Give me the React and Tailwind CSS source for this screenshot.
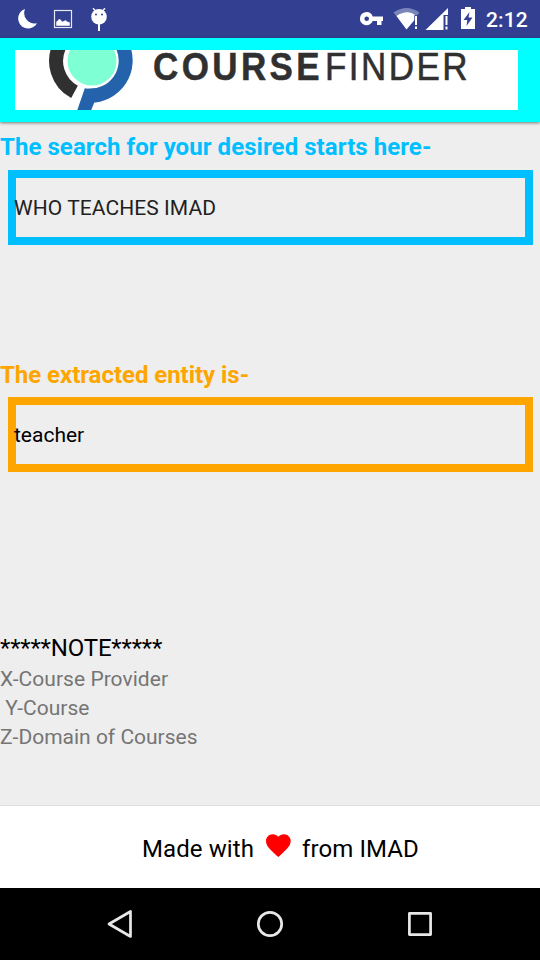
function StatusBar() {
  return (
    <div className="flex h-[38px] shrink-0 items-start bg-[#334091] text-white">
      <svg className="ml-[17px] h-[38px] w-[21px]" viewBox="17 0 21 38" fill="#fff">
        <path d="M25 9A10 10 0 1 0 37 23.200A10.500 10.500 0 0 1 25 9Z" />
      </svg>
      <svg className="ml-[15px] h-[38px] w-[20px]" viewBox="53 0 20 38">
        <rect x="54.5" y="10.5" width="17" height="17" fill="none" stroke="#e6e8f3" strokeWidth="1.2" />
        <path d="M56.500 25.500V22L59.500 19L62.500 22L65.500 20.500L67.500 22L69.500 22.500V25.500Z" fill="#fff" stroke="#fff" strokeWidth=".5" />
      </svg>
      <svg className="ml-[17px] h-[38px] w-[18px]" viewBox="90 0 18 38">
        <ellipse cx="99" cy="16.700" rx="7.800" ry="7.700" fill="#fff" />
        <path d="M93 8.300L95.600 11M105 8.300L102.400 11" stroke="#fff" strokeWidth="1.300" />
        <path d="M99 24V31" stroke="#fff" strokeWidth="2" />
        <circle cx="96" cy="14.600" r="1" fill="#334091" />
        <circle cx="102" cy="14.600" r="1" fill="#334091" />
      </svg>
      <svg className="ml-auto h-[38px] w-[24px]" viewBox="360 0 24 38">
        <path fillRule="evenodd" fill="#fff" d="M366.700 12A6.600 6.600 0 1 0 372.700 21H377V25H381.500V21H383V16.500H372.700A6.600 6.600 0 0 0 366.700 12ZM366.700 16.400A2.300 2.300 0 1 1 366.700 21A2.300 2.300 0 0 1 366.700 16.400Z" />
      </svg>
      <svg className="ml-[9px] h-[38px] w-[28px]" viewBox="393 0 28 38">
        <path d="M393.500 12.500Q406.500 3.500 419.500 12.500L417 15.500H414L406.500 29Z" fill="#7984b9" />
        <path d="M396.500 16Q406.500 9.500 414.500 14.500V20L406.500 29.500Z" fill="#fff" />
        <path d="M414.500 15.500H418V24H414.500Z" fill="#334091" />
        <path d="M416 16V25M416 26.500V29" stroke="#fff" strokeWidth="2" />
      </svg>
      <svg className="ml-[4px] h-[38px] w-[25px]" viewBox="425 0 25 38">
        <path d="M425.500 30L448 8V15H443.500V30Z" fill="#fff" />
        <path d="M446.500 16V25M446.500 26.500V29.500" stroke="#fff" strokeWidth="2" />
      </svg>
      <svg className="ml-[10px] h-[38px] w-[16px]" viewBox="460 0 16 38">
        <path d="M461 9H465V7H471V9H475V29H461Z" fill="#fff" />
        <path d="M469.500 12L463.500 20H467.300L466.500 26L472.500 17.500H468.500Z" fill="#334091" />
      </svg>
      <span className="mr-[12px] ml-[10px] w-[42px] text-[21px] leading-[40px] font-medium tracking-[0.1px] whitespace-nowrap">2:12</span>
    </div>
  );
}

function Header() {
  return (
    <header className="z-10 h-[84px] shrink-0 bg-[#00ffff] pt-3 pl-[15px] shadow-[0_1px_3px_rgba(0,0,0,0.5)]">
      <div className="flex h-[60px] w-[503px] bg-white">
        <svg className="h-[60px] w-[138px] shrink-0" viewBox="15 50 138 60">
          <path d="M60 45A35 35 0 0 0 74.500 91.900" fill="none" stroke="#303030" strokeWidth="14" />
          <path d="M122 45A35 35 0 0 1 88 95.500" fill="none" stroke="#2463ac" strokeWidth="14" />
          <path d="M84.800 88.300L77 111H90.800L94.500 102L95 88.600L90 89Z" fill="#2463ac" />
          <circle cx="92" cy="61" r="24.500" fill="#7fffd4" />
        </svg>
        <div className="flex font-['Liberation_Sans',Arial,sans-serif] text-[38px] leading-[34px] text-[#303030]">
          <span className="w-[172px] origin-left scale-x-[0.92] font-bold tracking-[3.7px] whitespace-nowrap [-webkit-text-stroke:0.5px_#303030]">COURSE</span>
          <span className="origin-left scale-x-[0.92] tracking-[2.7px] whitespace-nowrap [-webkit-text-stroke:0.6px_#303030]">FINDER</span>
        </div>
      </div>
    </header>
  );
}

function NavigationBar() {
  return (
    <nav className="flex h-[72px] shrink-0 items-center justify-center gap-[110px] bg-black">
      <svg className="size-10" viewBox="100 904 40 40" fill="none" stroke="#e8e8e8" strokeWidth="2.700" strokeLinejoin="round">
        <path d="M109 924L130.500 911.500V936.500Z" />
      </svg>
      <svg className="size-10" viewBox="250 904 40 40" fill="none" stroke="#e8e8e8" strokeWidth="2.700">
        <circle cx="270" cy="924" r="11.700" />
      </svg>
      <svg className="size-10" viewBox="400 904 40 40" fill="none" stroke="#e8e8e8" strokeWidth="2.700" strokeLinejoin="round">
        <rect x="409.400" y="913.400" width="21.200" height="21.200" />
      </svg>
    </nav>
  );
}

export default function App() {
  return (
    <div className="flex h-[960px] w-[540px] flex-col overflow-hidden bg-[#eeeeee] font-[Roboto,sans-serif] text-black">
      <StatusBar />
      <Header />
      <main className="flex h-[683px] shrink-0 flex-col">
        <h1 className="mt-[9px] h-8 text-2xl leading-8 font-bold tracking-[0.06px] text-[#00bfff]">The search for your desired starts here-</h1>
        <div className="mt-[7px] ml-2 h-[75px] w-[525px] border-8 border-[#00bfff]">
          <p className="-ml-[2px] text-[21px] leading-[60px] tracking-[0.07px] text-[#212121]">WHO TEACHES IMAD</p>
        </div>
        <h2 className="mt-[114px] h-8 text-2xl leading-8 font-bold tracking-[-0.04px] text-[#ffa500]">The extracted entity is-</h2>
        <div className="mt-[6px] ml-2 h-[75px] w-[525px] border-8 border-[#ffa500]">
          <p className="-ml-[2px] text-[21px] leading-[60px]">teacher</p>
        </div>
        <h3 className="mt-[160px] h-8 text-2xl leading-8 tracking-[-0.18px]">*****NOTE*****</h3>
        <div className="mt-px text-[21px] leading-[29px] whitespace-pre text-[#757575]">
          <p className="tracking-[0.04px]">X-Course Provider</p>
          <p> Y-Course</p>
          <p>Z-Domain of Courses</p>
        </div>
      </main>
      <footer className="flex h-[83px] shrink-0 border-t border-[#dddddd] bg-white pl-[142px] text-2xl leading-[86px] tracking-[0.1px]">
        <span className="w-[123px]">Made with</span>
        <svg className="mt-[27px] h-[24px] w-[27px]" viewBox="265 833 27 24">
          <path d="M278.300 857L276.500 855.400C270 849.500 266 846 266 841C266 837 269 834.200 272.800 834.200C275 834.200 277 835.300 278.300 836.800C279.600 835.300 281.600 834.200 283.800 834.200C287.600 834.200 290.700 837 290.700 841C290.700 846 286.600 849.500 280.100 855.400Z" fill="#f00" />
        </svg>
        <span className="ml-[10px]">from IMAD</span>
      </footer>
      <NavigationBar />
    </div>
  );
}
